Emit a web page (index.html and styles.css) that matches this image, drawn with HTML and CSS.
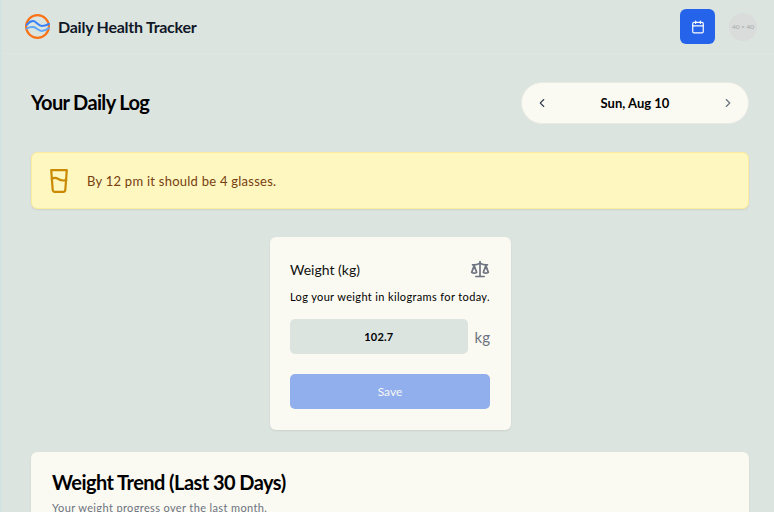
FILE: index.html
```html
<!DOCTYPE html>
<html lang="en">
  <head>
    <meta charset="UTF-8" />
    <title>Daily Health Tracker</title>
    <link rel="stylesheet" href="styles.css">
  </head>
  <body>
    <header class="topbar">
      <div class="brand">
        <svg class="brand-logo" viewBox="0 0 25 25" fill="none">
          <circle cx="12.5" cy="12.5" r="11.4" stroke="#f97316" stroke-width="2.200" />
          <path d="M1.700 11C4 8 6 6.700 8.500 7S13.500 12 16.700 12 22 11 24 10" stroke="#3b82f6" stroke-width="2" stroke-linecap="round" />
          <path d="M1.700 14.500C4 13 6 12.700 8.500 13S13.500 17 16.700 17 22 15.500 24 14" stroke="#60a5fa" stroke-width="2" stroke-linecap="round" />
        </svg>
        <span class="brand-name">Daily Health Tracker</span>
      </div>
      <div class="topbar-actions">
        <button class="calendar-btn">
          <svg viewBox="0 0 24 24" fill="none" stroke="#fff" stroke-width="2" stroke-linecap="round" stroke-linejoin="round">
            <path d="M8 2v4" />
            <path d="M16 2v4" />
            <rect x="3" y="4" width="18" height="18" rx="2" />
            <path d="M3 10h18" />
          </svg>
        </button>
        <div class="avatar">40 × 40</div>
      </div>
    </header>

    <main class="content">
      <div class="log-head">
        <h1>Your Daily Log</h1>
        <div class="date-nav">
          <svg class="chev" viewBox="0 0 24 24" fill="none" stroke="#374151" stroke-width="2" stroke-linecap="round" stroke-linejoin="round"><path d="m15 18-6-6 6-6" /></svg>
          <span>Sun, Aug 10</span>
          <svg class="chev" viewBox="0 0 24 24" fill="none" stroke="#6b7280" stroke-width="2" stroke-linecap="round" stroke-linejoin="round"><path d="m9 18 6-6-6-6" /></svg>
        </div>
      </div>

      <div class="notice">
        <svg class="notice-icon" viewBox="0 0 18 24" fill="none" stroke="#ca8a04" stroke-width="2.200" stroke-linecap="round" stroke-linejoin="round">
          <path d="M1.200 1.200h15.600l-1.500 19.600a2 2 0 0 1-2 2H4.700a2 2 0 0 1-2-2z" />
          <path d="M1.800 10c2-1.500 4-1.500 6.500 0s5 2 8 1" />
        </svg>
        <p>By 12 pm it should be 4 glasses.</p>
      </div>

      <section class="weight-card">
        <div class="weight-head">
          <span>Weight (kg)</span>
          <svg viewBox="0 0 24 24" fill="none" stroke="#6b7280" stroke-width="2" stroke-linecap="round" stroke-linejoin="round">
            <path d="m16 16 3-8 3 8c-.9.700-1.900 1-3 1s-2.100-.300-3-1Z" />
            <path d="m2 16 3-8 3 8c-.9.700-1.900 1-3 1s-2.100-.300-3-1Z" />
            <path d="M7 21h10" />
            <path d="M12 3v18" />
            <path d="M3 7h2c2 0 5-1 7-2 2 1 5 2 7 2h2" />
          </svg>
        </div>
        <p class="weight-hint">Log your weight in kilograms for today.</p>
        <div class="weight-input">
          <div class="weight-value">102.7</div>
          <span>kg</span>
        </div>
        <button class="save-btn">Save</button>
      </section>

      <section class="trend-card">
        <h2>Weight Trend (Last 30 Days)</h2>
        <p>Your weight progress over the last month.</p>
      </section>
    </main>
  </body>
</html>
```

FILE: styles.css
```css
html, body {
  margin: 0;
  padding: 0;
  height: 100%;
  overflow: hidden;
}

body {
  font-family: Lato, sans-serif;
  background: #dce4e0;
  color: #000;
  border-left: 2px solid #d3e3e2;
}

.topbar {
  display: flex;
  justify-content: space-between;
  align-items: center;
  height: 53px;
  padding: 0 17px 0 23px;
  border-bottom: 1px solid #dfe6e3;
}

.brand {
  display: flex;
  align-items: center;
  gap: 8px;
}

.brand-logo {
  width: 25px;
  height: 25px;
}

.brand-name {
  font-size: 16px;
  font-weight: 700;
  color: #111827;
  letter-spacing: -0.25px;
}

.topbar-actions {
  display: flex;
  align-items: center;
  gap: 14px;
}

.calendar-btn {
  display: flex;
  justify-content: center;
  align-items: center;
  width: 35px;
  height: 35px;
  padding: 0;
  border: none;
  border-radius: 6px;
  background: #2563eb;
}

.calendar-btn svg {
  width: 14px;
  height: 14px;
}

.avatar {
  width: 28px;
  height: 28px;
  border-radius: 50%;
  background: #d9dcdb;
  color: #a3a8a8;
  font-size: 6.5px;
  line-height: 28px;
  text-align: center;
}

.content {
  padding: 28px 25px 0 29px;
}

.log-head {
  display: flex;
  justify-content: space-between;
  align-items: center;
  margin-bottom: 28px;
}

.log-head h1 {
  margin: 0 0 2px;
  font-size: 20px;
  font-weight: 700;
  letter-spacing: -0.65px;
}

.date-nav {
  display: flex;
  justify-content: space-between;
  align-items: center;
  box-sizing: border-box;
  width: 228px;
  height: 42px;
  padding: 0 13px;
  border: 1px solid #e8ebe4;
  border-radius: 21px;
  background: #fbfaf2;
  font-size: 13px;
  font-weight: 700;
}

.chev {
  width: 14px;
  height: 14px;
}

.notice {
  display: flex;
  align-items: center;
  gap: 19px;
  box-sizing: border-box;
  height: 57px;
  padding: 0 18px;
  border: 1px solid #fbeb9a;
  border-radius: 6px;
  background: #fef7c0;
  box-shadow: 0 1px 2px rgba(0, 0, 0, 0.08);
}

.notice-icon {
  width: 18px;
  height: 24px;
}

.notice p {
  margin: 0;
  font-size: 13px;
  letter-spacing: 0.25px;
  color: #78400f;
}

.weight-card {
  box-sizing: border-box;
  width: 241px;
  height: 193px;
  margin: 28px auto 22px;
  padding: 22px 20.5px 21px;
  border-radius: 6px;
  background: #fbfaf2;
  box-shadow: 0 1px 2px rgba(0, 0, 0, 0.08);
}

.weight-head {
  display: flex;
  justify-content: space-between;
  align-items: center;
  font-size: 14px;
  color: #111;
}

.weight-head svg {
  width: 20px;
  height: 20px;
}

.weight-hint {
  margin: 10px 0 14px;
  font-size: 11px;
  line-height: 16px;
  letter-spacing: 0.36px;
}

.weight-input {
  display: flex;
  align-items: center;
  gap: 7px;
  color: #6b7280;
  font-size: 15px;
}

.weight-value {
  flex: 1;
  height: 35px;
  border-radius: 5px;
  background: #dce4e0;
  color: #000;
  font-size: 11px;
  font-weight: 700;
  line-height: 35px;
  letter-spacing: 0.2px;
  text-align: center;
}

.save-btn {
  display: block;
  width: 100%;
  height: 35px;
  margin-top: 20px;
  border: none;
  border-radius: 5px;
  background: #91aeed;
  color: #f7f8f5;
  font-family: inherit;
  font-size: 12px;
}

.trend-card {
  padding: 18px 21px;
  height: 200px;
  border-radius: 6px;
  background: #fbfaf2;
  box-shadow: 0 1px 2px rgba(0, 0, 0, 0.08);
}

.trend-card h2 {
  margin: 0 0 7px;
  font-size: 20px;
  font-weight: 700;
  letter-spacing: -0.55px;
}

.trend-card p {
  margin: 0;
  font-size: 11px;
  letter-spacing: 0.37px;
  color: #6b7280;
}
```
